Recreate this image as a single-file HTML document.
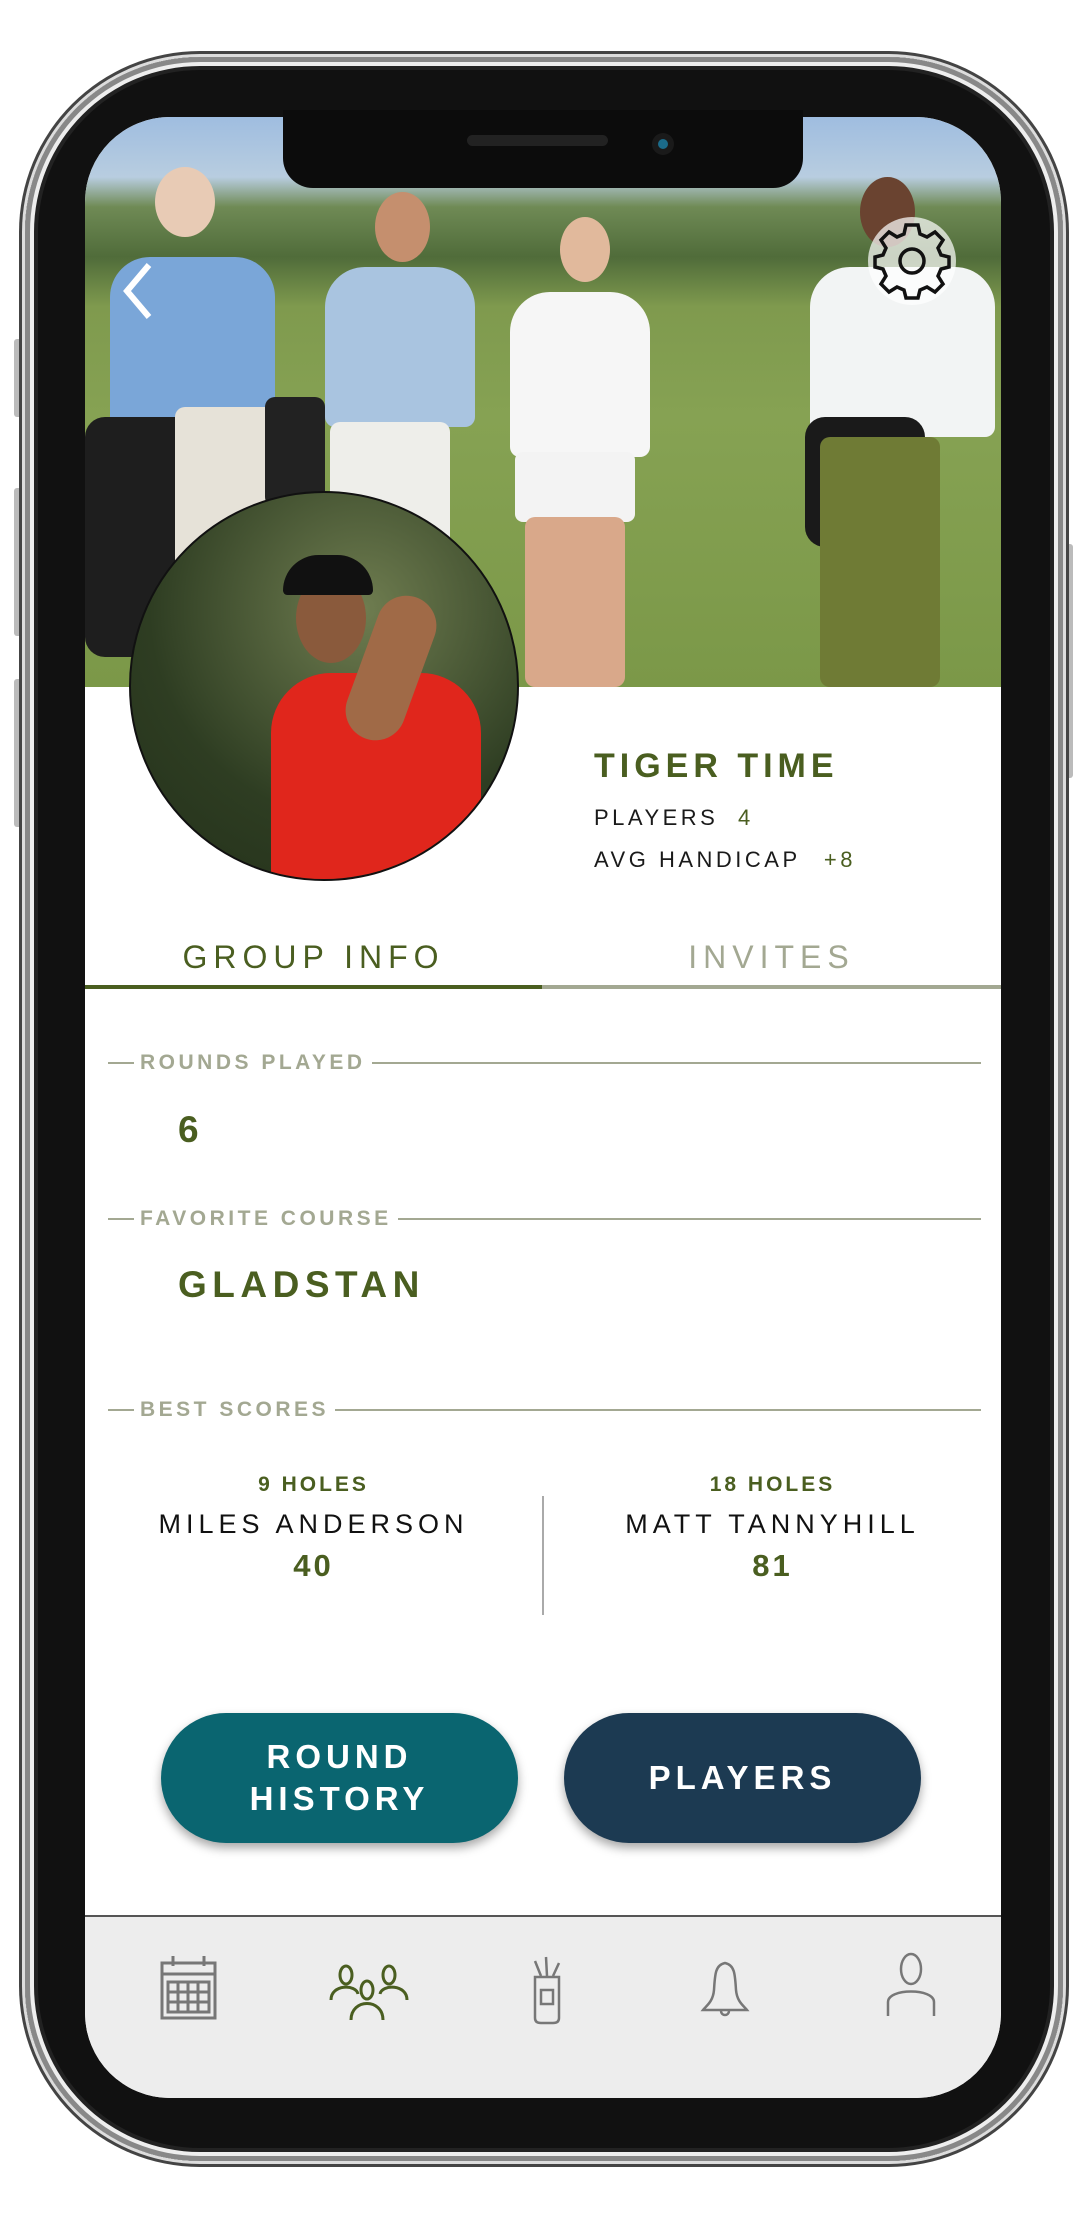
<!DOCTYPE html>
<html><head><meta charset="utf-8"><style>
*{margin:0;padding:0;box-sizing:border-box}
body{width:1086px;height:2218px;background:#fff;position:relative;overflow:hidden;font-family:"Liberation Sans",sans-serif}
.abs{position:absolute}
.btnside{position:absolute;background:#bbb;border-radius:3px}
.outer{left:25px;top:57px;width:1038px;height:2104px;border-radius:175px;background:#111;box-shadow:0 0 0 3px #ddd,0 0 0 6px #444,inset 0 0 0 5px #888,inset 0 0 0 9px #eee,inset 0 0 0 13px #222}
.screen{left:85px;top:117px;width:916px;height:1981px;border-radius:85px;background:#fff;overflow:hidden}
.g{color:#4a5e20}
.lbl{position:absolute;font-size:21px;letter-spacing:3.5px;color:#a3a892;font-weight:bold;background:#fff;padding:0 6px}
.hr{position:absolute;height:2px;background:#a3a892}
</style></head><body>
<div class="btnside" style="left:14px;top:339px;width:10px;height:78px"></div>
<div class="btnside" style="left:14px;top:488px;width:10px;height:148px"></div>
<div class="btnside" style="left:14px;top:679px;width:10px;height:148px"></div>
<div class="btnside" style="left:1063px;top:544px;width:10px;height:234px"></div>
<div class="abs outer"></div>
<div class="abs screen">
 <div class="abs" style="left:0;top:0;width:916px;height:570px;background:linear-gradient(#9fbde0 0,#b8cde0 60px,#6f8a55 90px,#506c3a 140px,#7f9a4e 190px,#86a253 300px,#7b9848 570px)"></div>
 <div class="abs" style="left:25px;top:140px;width:165px;height:170px;background:#7aa6d8;border-radius:40px 40px 10px 10px"></div>
 <div class="abs" style="left:0;top:300px;width:120px;height:240px;background:#1e1e1e;border-radius:20px"></div>
 <div class="abs" style="left:90px;top:290px;width:110px;height:200px;background:#e6e2d8;border-radius:10px"></div>
 <div class="abs" style="left:240px;top:150px;width:150px;height:160px;background:#a9c4e0;border-radius:40px 40px 10px 10px"></div>
 <div class="abs" style="left:245px;top:305px;width:120px;height:265px;background:#eeeeea;border-radius:10px"></div>
 <div class="abs" style="left:180px;top:280px;width:60px;height:110px;background:#222;border-radius:10px"></div>
 <div class="abs" style="left:425px;top:175px;width:140px;height:165px;background:#f6f6f6;border-radius:40px 40px 10px 10px"></div>
 <div class="abs" style="left:430px;top:335px;width:120px;height:70px;background:#f3f3f3;border-radius:8px"></div>
 <div class="abs" style="left:440px;top:400px;width:100px;height:170px;background:#d9a88a;border-radius:10px"></div>
 <div class="abs" style="left:725px;top:150px;width:185px;height:170px;background:#f2f4f4;border-radius:40px 40px 10px 10px"></div>
 <div class="abs" style="left:720px;top:300px;width:120px;height:130px;background:#1a1a1a;border-radius:20px"></div>
 <div class="abs" style="left:735px;top:320px;width:120px;height:250px;background:#6f7b35;border-radius:10px"></div>
 <div class="abs" style="left:70px;top:50px;width:60px;height:70px;background:#e8cbb5;border-radius:50%"></div>
 <div class="abs" style="left:290px;top:75px;width:55px;height:70px;background:#c58f6e;border-radius:50%"></div>
 <div class="abs" style="left:475px;top:100px;width:50px;height:65px;background:#e1b99c;border-radius:50%"></div>
 <div class="abs" style="left:775px;top:60px;width:55px;height:70px;background:#6a4330;border-radius:50%"></div>
 <svg class="abs" style="left:36px;top:144px" width="34" height="60" viewBox="0 0 34 60"><path d="M28 4 L6 30 L28 56" fill="none" stroke="#fff" stroke-width="6"/></svg>
 <div class="abs" style="left:783px;top:100px;width:88px;height:88px;border-radius:50%;background:rgba(255,255,255,.7)"></div>
 <svg class="abs" style="left:785px;top:102px" width="84" height="84" viewBox="-42 -42 84 84"><g fill="none" stroke="#111" stroke-width="3.5"><path d="M-6,-36 L6,-36 L8,-27 L15,-24 L23,-29 L31,-21 L26,-13 L29,-6 L37,-4 L37,6 L29,8 L26,15 L31,23 L23,31 L15,26 L8,29 L6,37 L-6,37 L-8,29 L-15,26 L-23,31 L-31,23 L-26,15 L-29,8 L-37,6 L-37,-4 L-29,-6 L-26,-13 L-31,-21 L-23,-29 L-15,-24 L-8,-27 Z"/><circle r="12"/></g></svg>
 <div class="abs" style="left:44px;top:374px;width:390px;height:390px;border-radius:50%;border:2px solid #111;overflow:hidden;background:radial-gradient(circle at 60% 30%,#6f7d50,#2e3d22 60%,#23301a)">
  <div class="abs" style="left:140px;top:180px;width:210px;height:220px;background:#e0261c;border-radius:60px 60px 10px 10px"></div>
  <div class="abs" style="left:165px;top:80px;width:70px;height:90px;background:#8a5a3c;border-radius:50%"></div>
  <div class="abs" style="left:152px;top:62px;width:90px;height:40px;background:#111;border-radius:40px 40px 5px 5px"></div>
  <div class="abs" style="left:230px;top:100px;width:60px;height:150px;background:#a06a47;border-radius:30px;transform:rotate(20deg)"></div>
 </div>
 <div class="abs g" style="left:509px;top:630px;font-size:34px;font-weight:bold;letter-spacing:5px">TIGER TIME</div>
 <div class="abs" style="left:509px;top:688px;font-size:22px;letter-spacing:3.5px;color:#1a1a1a">PLAYERS <span class="g" style="margin-left:10px">4</span></div>
 <div class="abs" style="left:509px;top:730px;font-size:22px;letter-spacing:3.5px;color:#1a1a1a">AVG HANDICAP <span class="g" style="margin-left:14px">+8</span></div>
 <div class="abs g" style="left:0;top:822px;width:457px;text-align:center;font-size:32px;letter-spacing:6px">GROUP INFO</div>
 <div class="abs" style="left:457px;top:822px;width:459px;text-align:center;font-size:32px;letter-spacing:6px;color:#a3a892">INVITES</div>
 <div class="abs" style="left:0;top:868px;width:457px;height:4px;background:#4a5e20"></div>
 <div class="abs" style="left:457px;top:868px;width:459px;height:4px;background:#a3a892"></div>
 <div class="hr" style="left:23px;top:945px;width:873px"></div>
 <div class="lbl" style="left:49px;top:934px">ROUNDS PLAYED</div>
 <div class="abs g" style="left:93px;top:992px;font-size:37px;font-weight:bold">6</div>
 <div class="hr" style="left:23px;top:1101px;width:873px"></div>
 <div class="lbl" style="left:49px;top:1090px">FAVORITE COURSE</div>
 <div class="abs g" style="left:93px;top:1147px;font-size:37px;font-weight:bold;letter-spacing:5.5px">GLADSTAN</div>
 <div class="hr" style="left:23px;top:1292px;width:873px"></div>
 <div class="lbl" style="left:49px;top:1281px">BEST SCORES</div>
 <div class="abs" style="left:0;top:1356px;width:457px;text-align:center">
  <div class="g" style="font-size:21px;font-weight:bold;letter-spacing:3px">9 HOLES</div>
  <div style="font-size:27px;letter-spacing:5px;color:#111;margin-top:12px">MILES ANDERSON</div>
  <div class="g" style="font-size:31px;font-weight:bold;letter-spacing:3px;margin-top:8px">40</div>
 </div>
 <div class="abs" style="left:457px;top:1379px;width:2px;height:119px;background:#aaa"></div>
 <div class="abs" style="left:459px;top:1356px;width:457px;text-align:center">
  <div class="g" style="font-size:21px;font-weight:bold;letter-spacing:3px">18 HOLES</div>
  <div style="font-size:27px;letter-spacing:5px;color:#111;margin-top:12px">MATT TANNYHILL</div>
  <div class="g" style="font-size:31px;font-weight:bold;letter-spacing:3px;margin-top:8px">81</div>
 </div>
 <div class="abs" style="left:76px;top:1596px;width:357px;height:130px;border-radius:65px;background:#0a6570;box-shadow:0 5px 10px rgba(0,0,0,.35);color:#fff;font-size:33px;font-weight:bold;letter-spacing:5px;text-align:center;line-height:42px;padding-top:23px">ROUND<br>HISTORY</div>
 <div class="abs" style="left:479px;top:1596px;width:357px;height:130px;border-radius:65px;background:#1c3a52;box-shadow:0 5px 10px rgba(0,0,0,.35);color:#fff;font-size:33px;font-weight:bold;letter-spacing:5px;text-align:center;line-height:130px">PLAYERS</div>
 <div class="abs" style="left:0;top:1798px;width:916px;height:183px;background:#ededed;border-top:2px solid #555"></div>
 <svg class="abs" style="left:75px;top:1835px" width="60" height="70" viewBox="0 0 60 70"><g fill="none" stroke="#777" stroke-width="3"><rect x="2" y="11" width="53" height="55"/><line x1="2" y1="22" x2="55" y2="22"/><line x1="13" y1="4" x2="13" y2="14"/><line x1="44" y1="4" x2="44" y2="14"/><rect x="8" y="30" width="41" height="30"/><path d="M18 30V60M28 30V60M38 30V60M8 40H49M8 50H49"/></g></svg>
 <svg class="abs" style="left:243px;top:1845px" width="82" height="60" viewBox="0 0 82 60"><g fill="none" stroke="#4a5e20" stroke-width="3"><ellipse cx="18" cy="13" rx="6" ry="9"/><ellipse cx="61" cy="13" rx="6" ry="9"/><ellipse cx="39" cy="28" rx="6" ry="9"/><path d="M3 38 C3 22 28 22 30 32M79 38 C79 22 54 22 52 32M23 58 C23 36 55 36 55 58"/></g></svg>
 <svg class="abs" style="left:442px;top:1838px" width="40" height="70" viewBox="0 0 40 70"><g fill="none" stroke="#777" stroke-width="2.5"><path d="M8 22 H32 V63 Q32 68 26 68 H14 Q8 68 8 63 Z"/><rect x="14" y="35" width="12" height="14"/><path d="M14 21 L8 6 M20 21 L19 2 M26 21 L32 8"/></g></svg>
 <svg class="abs" style="left:612px;top:1843px" width="56" height="60" viewBox="0 0 56 60"><g fill="none" stroke="#777" stroke-width="2.5"><path d="M28 3 C18 5 18 15 17 30 C16 42 9 46 6 50 H50 C47 46 40 42 39 30 C38 15 38 5 28 3Z"/><path d="M24 51 A4 4 0 0 0 32 51"/></g></svg>
 <svg class="abs" style="left:800px;top:1835px" width="52" height="66" viewBox="0 0 52 66"><g fill="none" stroke="#777" stroke-width="2.5"><ellipse cx="26" cy="17" rx="10" ry="15"/><path d="M3 64 V50 C3 36 49 36 49 50 V64"/></g></svg>
</div>
<div class="abs" style="left:283px;top:110px;width:520px;height:78px;background:#0c0c0c;border-radius:0 0 30px 30px"></div>
<div class="abs" style="left:467px;top:135px;width:141px;height:11px;background:#222;border-radius:6px"></div>
<div class="abs" style="left:652px;top:133px;width:22px;height:22px;background:#1a1a1a;border-radius:50%"></div>
<div class="abs" style="left:658px;top:139px;width:10px;height:10px;background:#1b6b8a;border-radius:50%"></div>
</body></html>
